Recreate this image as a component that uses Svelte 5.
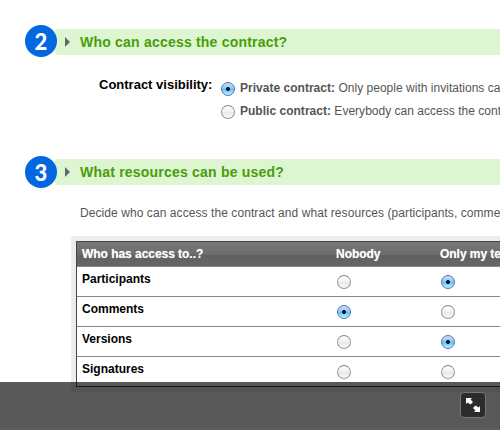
<script>
  const rows = [
    { name: 'Participants', picked: 1 },
    { name: 'Comments', picked: 0 },
    { name: 'Versions', picked: 1 },
    { name: 'Signatures', picked: -1 }
  ];
</script>

{#snippet radio(on)}
  <span class="radio" class:on role="radio" aria-checked={on} tabindex="0"></span>
{/snippet}

{#snippet heading(number, title)}
  <header class="heading">
    <span class="badge">{number}</span>
    <h2>
      <svg width="5" height="10" viewBox="0 0 5 10"><path d="M0 0 5 5 0 10z" fill="#666" /></svg>
      <span>{title}</span>
    </h2>
  </header>
{/snippet}

<div class="page">
  <section class="visibility">
    {@render heading(2, 'Who can access the contract?')}
    <div class="field">
      <b class="label">Contract visibility:</b>
      <div class="options">
        <div class="option">{@render radio(true)}<span><b>Private contract:</b> Only people with invitations ca</span></div>
        <div class="option">{@render radio(false)}<span><b>Public contract:</b> Everybody can access the cont</span></div>
      </div>
    </div>
  </section>

  <section class="resources">
    {@render heading(3, 'What resources can be used?')}
    <p>Decide who can access the contract and what resources (participants, comme</p>
    <div class="frame">
      <div class="table">
        <div class="row head">
          <span class="name">Who has access to..?</span>
          <span class="cell">Nobody</span>
          <span class="cell">Only my te</span>
        </div>
        {#each rows as row}
          <div class="row">
            <span class="name">{row.name}</span>
            <span class="cell">{@render radio(row.picked === 0)}</span>
            <span class="cell">{@render radio(row.picked === 1)}</span>
          </div>
        {/each}
      </div>
    </div>
  </section>

  <footer>
    <button aria-label="Expand">
      <svg width="14" height="14" viewBox="0 0 14 14" fill="#fff">
        <path d="M0 0H6L4.500 1.500 7 4 4.500 6.500 1.500 4.500 0 6z" />
        <path d="M14 14H8L9.500 12.500 7 10 9.500 7.500 12.500 9.500 14 8z" />
      </svg>
    </button>
  </footer>
</div>

<style>
  :global(body) { margin: 0; background: #fff; }
  .page {
    position: relative;
    width: 500px;
    height: 430px;
    overflow: hidden;
    box-sizing: border-box;
    padding-top: 25px;
    font: 12px/16px "Liberation Sans", Arial, sans-serif;
    color: #555;
    white-space: nowrap;
  }
  .visibility { height: 130px; }
  .heading { display: flex; align-items: flex-start; padding-left: 25px; height: 33px; }
  .badge {
    width: 32px;
    height: 32px;
    border-radius: 50%;
    background: #0367e0;
    color: #fff;
    font: 900 22px/33px Lato, sans-serif;
    text-align: center;
    position: relative;
    z-index: 1;
  }
  .resources .badge { margin-top: 1px; }
  h2 {
    display: flex;
    align-items: center;
    flex: 1;
    height: 26px;
    margin: 4px 0 0 -2px;
    padding-left: 10px;
    box-sizing: border-box;
    gap: 10px;
    background: #def5d1;
    border-radius: 3px 0 0 3px;
    color: #479e0b;
    font-size: 14px;
    letter-spacing: 0.21px;
  }
  .field { display: flex; padding: 18px 0 0 99px; }
  .label { flex: none; width: 122px; padding-top: 1px; color: #000; font-size: 13px; }
  .options { padding-top: 4px; }
  .option { display: flex; height: 23px; gap: 5px; }
  .option span { letter-spacing: 0.02px; }
  .radio {
    display: block;
    flex: none;
    box-sizing: border-box;
    width: 14px;
    height: 14px;
    margin-top: 2px;
    border: 1px solid #999;
    border-top-color: #888;
    border-radius: 50%;
    background: linear-gradient(#fff, #f3f3f3 45%, #e8e8e8 50%, #fafafa);
  }
  .radio.on {
    border-color: #5275b5;
    background:
      radial-gradient(circle at 50% 50%, #001827 0 1.6px, transparent 2.3px),
      linear-gradient(#c8def7, #91c9f4 45%, #62bbf4 50%, #b4f5ff);
  }
  .resources { height: 275px; }
  p { margin: 17px 0 0 80px; letter-spacing: 0.075px; }
  .frame {
    margin: 15px 0 0 71px;
    padding: 5px 0 5px 5px;
    background: #ededed;
    border-radius: 3px 0 0 3px;
  }
  .table { border: 1px solid #444; border-right: 0; background: #fff; }
  .row { display: flex; height: 29px; border-top: 1px solid #888; color: #000; font-weight: bold; }
  .row.head {
    height: 24px;
    border-top: 0;
    background: linear-gradient(#797979, #6b6b6b 52%, #606060 54%, #666);
    color: #fff;
    line-height: 24px;
    letter-spacing: -0.04px;
    text-shadow: 0 0 1px rgba(255, 255, 255, 0.5);
  }
  .name { flex: none; width: 254px; padding: 4px 0 0 5px; }
  .head .name, .head .cell { padding-top: 0; }
  .cell { flex: none; width: 104px; padding-top: 6px; }
  .cell .radio, .cell :global(.radio) { margin-left: 1px; }
  footer {
    position: absolute;
    inset: 382px 0 0;
    display: flex;
    justify-content: flex-end;
    padding: 10px 14px 0 0;
    box-sizing: border-box;
    background: rgba(0, 0, 0, 0.65);
    border-bottom: 1px solid #655b60;
  }
  button {
    display: flex;
    align-items: center;
    justify-content: center;
    width: 26px;
    height: 26px;
    padding: 0;
    border: 1px solid #777;
    border-radius: 4px;
    background: #2c2c2c;
  }
</style>
